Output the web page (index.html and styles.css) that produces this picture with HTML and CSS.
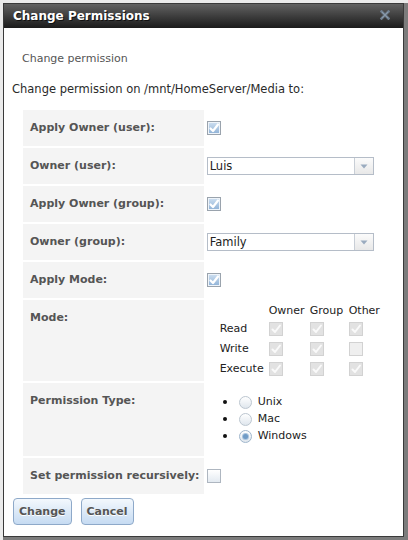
FILE: index.html
```html
<!DOCTYPE html>
<html>
<head>
<meta charset="utf-8">
<title>Change Permissions</title>
<link rel="stylesheet" href="styles.css">
</head>
<body>
<div class="dialog">
  <div class="titlebar">
    <span class="title">Change Permissions</span>
    <svg class="close" width="10" height="10" viewBox="0 0 10 10"><path d="M1.5 1.5 L8.5 8.5 M8.5 1.5 L1.5 8.5" stroke="#6e7e8f" stroke-width="2.6" stroke-linecap="square"/><path d="M1.8 1.8 L8.2 8.2 M8.2 1.8 L1.8 8.2" stroke="#8c9cac" stroke-width="0.9"/></svg>
  </div>
  <div class="content">
    <div class="legend">Change permission</div>
    <p class="intro">Change permission on /mnt/HomeServer/Media to:</p>
    <table class="form">
      <tr>
        <th>Apply Owner (user):</th>
        <td><span class="cb on"><svg viewBox="0 0 12 12"><path d="M2.5 6.5 L5 9 L10 2.5" class="ck"/></svg></span></td>
      </tr>
      <tr>
        <th>Owner (user):</th>
        <td><div class="select"><span class="val">Luis</span><span class="arr"><svg width="8" height="5" viewBox="0 0 8 5"><path d="M0.5 0.5 H7.5 L4 4.5 Z" fill="#9aabbf"/></svg></span></div></td>
      </tr>
      <tr>
        <th>Apply Owner (group):</th>
        <td><span class="cb on"><svg viewBox="0 0 12 12"><path d="M2.5 6.5 L5 9 L10 2.5" class="ck"/></svg></span></td>
      </tr>
      <tr>
        <th>Owner (group):</th>
        <td><div class="select"><span class="val">Family</span><span class="arr"><svg width="8" height="5" viewBox="0 0 8 5"><path d="M0.5 0.5 H7.5 L4 4.5 Z" fill="#9aabbf"/></svg></span></div></td>
      </tr>
      <tr>
        <th>Apply Mode:</th>
        <td><span class="cb on"><svg viewBox="0 0 12 12"><path d="M2.5 6.5 L5 9 L10 2.5" class="ck"/></svg></span></td>
      </tr>
      <tr>
        <th>Mode:</th>
        <td class="mode-cell">
          <div class="mode">
            <span></span><span class="hd">Owner</span><span class="hd">Group</span><span class="hd">Other</span>
            <span class="rl">Read</span>
            <span class="cb dis"><svg viewBox="0 0 12 12"><path d="M2.5 6.5 L5 9 L10 2.5" class="ckd"/></svg></span>
            <span class="cb dis"><svg viewBox="0 0 12 12"><path d="M2.5 6.5 L5 9 L10 2.5" class="ckd"/></svg></span>
            <span class="cb dis"><svg viewBox="0 0 12 12"><path d="M2.5 6.5 L5 9 L10 2.5" class="ckd"/></svg></span>
            <span class="rl">Write</span>
            <span class="cb dis"><svg viewBox="0 0 12 12"><path d="M2.5 6.5 L5 9 L10 2.5" class="ckd"/></svg></span>
            <span class="cb dis"><svg viewBox="0 0 12 12"><path d="M2.5 6.5 L5 9 L10 2.5" class="ckd"/></svg></span>
            <span class="cb dis off"></span>
            <span class="rl">Execute</span>
            <span class="cb dis"><svg viewBox="0 0 12 12"><path d="M2.5 6.5 L5 9 L10 2.5" class="ckd"/></svg></span>
            <span class="cb dis"><svg viewBox="0 0 12 12"><path d="M2.5 6.5 L5 9 L10 2.5" class="ckd"/></svg></span>
            <span class="cb dis"><svg viewBox="0 0 12 12"><path d="M2.5 6.5 L5 9 L10 2.5" class="ckd"/></svg></span>
          </div>
        </td>
      </tr>
      <tr>
        <th>Permission Type:</th>
        <td class="type-cell">
          <ul class="radios">
            <li><span class="dot"></span><span class="radio"></span>Unix</li>
            <li><span class="dot"></span><span class="radio"></span>Mac</li>
            <li><span class="dot"></span><span class="radio sel"></span>Windows</li>
          </ul>
        </td>
      </tr>
      <tr>
        <th>Set permission recursively:</th>
        <td><span class="cb off"></span></td>
      </tr>
    </table>
    <div class="buttons">
      <button class="btn">Change</button>
      <button class="btn">Cancel</button>
    </div>
  </div>
</div>
</body>
</html>
```
FILE: styles.css
```css
html, body {
  margin: 0;
  padding: 0;
}
body {
  background: #ebebeb;
  font-family: "DejaVu Sans", Verdana, sans-serif;
  font-size: 11px;
  color: #222;
  width: 408px;
  height: 540px;
  overflow: hidden;
}
.dialog {
  margin: 3px 0 0 3px;
  width: 399px;
  height: 532px;
  border: 1px solid #3a3a3a;
  background: #fff;
  box-shadow: 4px 0 0 #7c7c7c, 0 4px 0 #7c7c7c, 4px 4px 0 #7c7c7c;
}
.titlebar {
  height: 24px;
  display: flex;
  align-items: center;
  justify-content: space-between;
  padding: 0 13px 0 9px;
  background: linear-gradient(#626262, #3a3a3a 55%, #1b1b1b);
}
.title {
  color: #fff;
  font-weight: bold;
  font-size: 12px;
  line-height: 24px;
  text-shadow: 1px 1px 0 #111;
}
.close {
  display: block;
  margin-top: -2px;
}
.content {
  padding: 0 0 0 8px;
}
.legend {
  margin: 23px 0 0 10px;
  line-height: 16px;
  color: #555;
}
.intro {
  margin: 14px 0 0 0;
  line-height: 16px;
  font-size: 11.5px;
  color: #2a2a2a;
}
.form {
  margin: 11px 0 0 9px;
  border-spacing: 2px;
  border-collapse: separate;
}
.form th {
  width: 174px;
  padding: 10px 0 10px 7px;
  background: #f4f4f4;
  color: #555;
  text-align: left;
  vertical-align: top;
  line-height: 16px;
  white-space: nowrap;
  font-weight: bold;
}
.form td {
  padding: 0 0 0 1px;
  vertical-align: middle;
  width: 180px;
}
.cb {
  display: block;
  width: 14px;
  height: 14px;
  box-sizing: border-box;
  border: 1px solid #9aa3ad;
  background: linear-gradient(#cfe0f1, #8eb1d6);
  box-shadow: inset 0 0 0 1px #eef4fa;
}
.cb svg {
  display: block;
  width: 12px;
  height: 12px;
}
.ck {
  fill: none;
  stroke: #fff;
  stroke-width: 2.2;
  stroke-linecap: round;
  stroke-linejoin: round;
}
.ckd {
  fill: none;
  stroke: #fafafa;
  stroke-width: 2;
  stroke-linecap: round;
  stroke-linejoin: round;
}
.cb.off {
  border-color: #aeb6c0;
  background: linear-gradient(#ffffff, #e3eaf1);
  box-shadow: none;
}
.cb.dis {
  border-color: #d2d2d2;
  background: #e2e2e2;
  box-shadow: none;
}
.cb.dis.off {
  background: #efefef;
}
.select {
  display: flex;
  width: 167px;
  height: 18px;
  box-sizing: border-box;
  border: 1px solid #b5bdc8;
  background: #fff;
}
.select .val {
  flex: 1;
  padding-left: 2px;
  line-height: 16px;
  font-size: 11.5px;
  color: #222;
}
.select .arr {
  width: 18px;
  border-left: 1px solid #c8ced6;
  background: linear-gradient(#fbfbfb, #e8e8e8);
  display: flex;
  align-items: center;
  justify-content: center;
}
.select .arr svg {
  display: block;
}
.form td.mode-cell {
  vertical-align: top;
  padding: 3px 0 2px 14px;
}
.mode {
  display: grid;
  grid-template-columns: 49px 41px 39px 32px;
  grid-template-rows: 16px 20px 20px 20px;
  align-items: center;
  color: #222;
  line-height: 16px;
}
.mode .hd, .mode .rl {
  white-space: nowrap;
}
.form td.type-cell {
  vertical-align: top;
  padding: 10px 0 12px 17px;
}
.radios {
  list-style: none;
  margin: 0;
  padding: 0;
}
.radios li {
  display: flex;
  align-items: center;
  height: 17px;
  color: #222;
}
.dot {
  width: 4px;
  height: 4px;
  border-radius: 50%;
  background: #111;
  margin-right: 12px;
}
.radio {
  width: 13px;
  height: 13px;
  box-sizing: border-box;
  border-radius: 50%;
  border: 1px solid #bcc6d0;
  background: linear-gradient(#ffffff, #dfe6ed);
  margin-right: 6px;
  margin-top: 2px;
  display: flex;
  align-items: center;
  justify-content: center;
}
.radio.sel {
  border-color: #9fb6cc;
}
.radio.sel::after {
  content: "";
  width: 5px;
  height: 5px;
  border-radius: 50%;
  background: #6f9bc6;
  box-shadow: 0 0 0 1px #a9c4de;
}
.buttons {
  display: flex;
  gap: 9px;
  margin: 2px 0 0 1px;
}
.btn {
  height: 27px;
  padding: 0 5px;
  border: 1px solid #8ea9c9;
  border-radius: 4px;
  background: linear-gradient(#f3f8fd, #c6dbf2);
  font-family: "DejaVu Sans", Verdana, sans-serif;
  font-size: 11px;
  font-weight: bold;
  color: #555;
  text-shadow: 0 1px 0 #fff;
}
```
